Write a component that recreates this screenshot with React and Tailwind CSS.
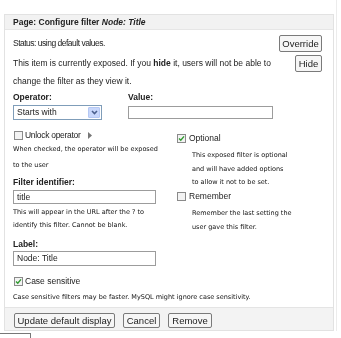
import React from 'react';

const Btn = ({ children, className = '' }) => (
  <button className={`flex items-center justify-center border border-[#7a7a7a] rounded-[2px] bg-[#f6f6f6] text-[9.5px] leading-none text-[#222] ${className}`}>
    {children}
  </button>
);

const Check = ({ checked }) => (
  <span className="flex items-center justify-center w-[9px] h-[9px] shrink-0 border border-[#8a8a8a] bg-[#f3f3f3]">
    {checked && (
      <svg width="7" height="7" viewBox="0 0 7 7">
        <path d="M1 3.4 L2.8 5.2 L6 1.4" stroke="#2f9a2f" strokeWidth="1.4" fill="none" />
      </svg>
    )}
  </span>
);

const Small = ({ children, className = '' }) => (
  <div className={`font-['DejaVu_Sans',Verdana,sans-serif] text-[6.5px] text-[#111] whitespace-nowrap ${className}`}>
    {children}
  </div>
);

export default function App() {
  return (
    <div className="w-[341px] h-[338px] bg-white overflow-hidden will-change-transform font-['Liberation_Sans',Arial,sans-serif] text-[#222]">
      <div className="flex">
        <div className="ml-[4px] mt-[14px] w-[330px] border-x border-t border-b border-[#e2e2e2]">
          {/* Header */}
          <div className="h-[15px] bg-[#f2f2f2] border-b border-[#e6e6e6] pl-[8px] text-[8.5px] font-bold leading-[14px] whitespace-nowrap">
            Page: Configure filter <em>Node: Title</em>
          </div>

          <div className="pl-[8px] pr-[11px] pb-[4px]">
            {/* Status */}
            <div className="flex justify-between items-center mt-[5px] h-[17px]">
              <span className="text-[8.5px] tracking-[-0.5px]">Status: using default values.</span>
              <Btn className="w-[43px] h-[17px]">Override</Btn>
            </div>

            {/* Exposed */}
            <div className="flex justify-between items-start mt-[2px]">
              <p className="text-[8.5px] leading-[18px] whitespace-nowrap">
                This item is currently exposed. If you <b>hide</b> it, users will not be able to
                <br />
                change the filter as they view it.
              </p>
              <Btn className="w-[27px] h-[17px] mt-[1px]">Hide</Btn>
            </div>

            {/* Operator / Value */}
            <div className="flex mt-[1px]">
              <div className="w-[115px]">
                <div className="text-[8.5px] font-bold leading-[12px]">Operator:</div>
                <div className="mt-[2px] w-[89px] h-[15px] border border-[#7f9db9] bg-white flex items-center justify-between pl-[3px] pr-[1px]">
                  <span className="text-[8.5px]">Starts with</span>
                  <span className="flex items-center justify-center w-[12px] h-[11px] bg-[#c8d7fb] border border-[#b5c8f4] rounded-[1px]">
                    <svg width="7" height="5" viewBox="0 0 7 5">
                      <path d="M1 1 L3.5 3.6 L6 1" stroke="#4a5f8c" strokeWidth="1.5" fill="none" />
                    </svg>
                  </span>
                </div>
              </div>
              <div>
                <div className="text-[8.5px] font-bold leading-[12px]">Value:</div>
                <div className="mt-[3px] w-[145px] h-[13px] border border-[#9c9c9c] bg-white" />
              </div>
            </div>

            {/* Two columns */}
            <div className="flex">
              <div className="w-[164px]">
                <div className="mt-[9px] h-[12px] flex items-center pl-[1px] gap-[2px]">
                  <Check />
                  <span className="text-[8.5px] tracking-[-0.3px]">Unlock operator</span>
                  <svg className="ml-[5px]" width="4" height="7" viewBox="0 0 4 7">
                    <polygon points="0,0 4,3.5 0,7" fill="#777" />
                  </svg>
                </div>
                <Small className="leading-[16px]">
                  When checked, the operator will be exposed
                  <br />
                  to the user
                </Small>
                <div className="mt-[3px] text-[8.5px] font-bold leading-[12px]">Filter identifier:</div>
                <div className="mt-[2px] w-[143px] h-[14px] border border-[#9c9c9c] bg-white flex items-center pl-[3px] text-[8.5px]">
                  title
                </div>
                <Small className="mt-[2px] leading-[13px]">
                  This will appear in the URL after the ? to
                  <br />
                  identify this filter. Cannot be blank.
                </Small>
                <div className="mt-[6px] text-[8.5px] font-bold leading-[12px]">Label:</div>
                <div className="mt-[1px] w-[143px] h-[15px] border border-[#9c9c9c] bg-white flex items-center pl-[3px] text-[8.5px]">
                  Node: Title
                </div>
              </div>

              <div>
                <div className="mt-[12px] h-[12px] flex items-center gap-[3px]">
                  <Check checked />
                  <span className="text-[8.5px]">Optional</span>
                </div>
                <Small className="pl-[15px] mt-[5px] leading-[13.5px]">
                  This exposed filter is optional
                  <br />
                  and will have added options
                  <br />
                  to allow it not to be set.
                </Small>
                <div className="mt-[1px] h-[12px] flex items-center gap-[3px]">
                  <Check />
                  <span className="text-[8.5px]">Remember</span>
                </div>
                <Small className="pl-[15px] mt-[3px] leading-[14px]">
                  Remember the last setting the
                  <br />
                  user gave this filter.
                </Small>
              </div>
            </div>

            {/* Case sensitive */}
            <div className="mt-[9px] h-[12px] flex items-center pl-[1px] gap-[2px]">
              <Check checked />
              <span className="text-[8.5px]">Case sensitive</span>
            </div>
            <Small className="mt-[4px] leading-[12px]">
              Case sensitive filters may be faster. MySQL might ignore case sensitivity.
            </Small>
          </div>

          {/* Buttons */}
          <div className="h-[23px] bg-[#f3f3f3] border-t border-[#e4e4e4] pt-[5px] pl-[9px] flex items-start gap-[8px]">
            <Btn className="w-[101px] h-[15px]">Update default display</Btn>
            <Btn className="w-[37px] h-[15px]">Cancel</Btn>
            <Btn className="w-[44px] h-[15px]">Remove</Btn>
          </div>
        </div>
        <div className="ml-[2px] w-px bg-[#ececec]" />
      </div>

      <div className="mt-[2px] w-[31px] h-[6px] border-t border-r border-[#777]" />
    </div>
  );
}
